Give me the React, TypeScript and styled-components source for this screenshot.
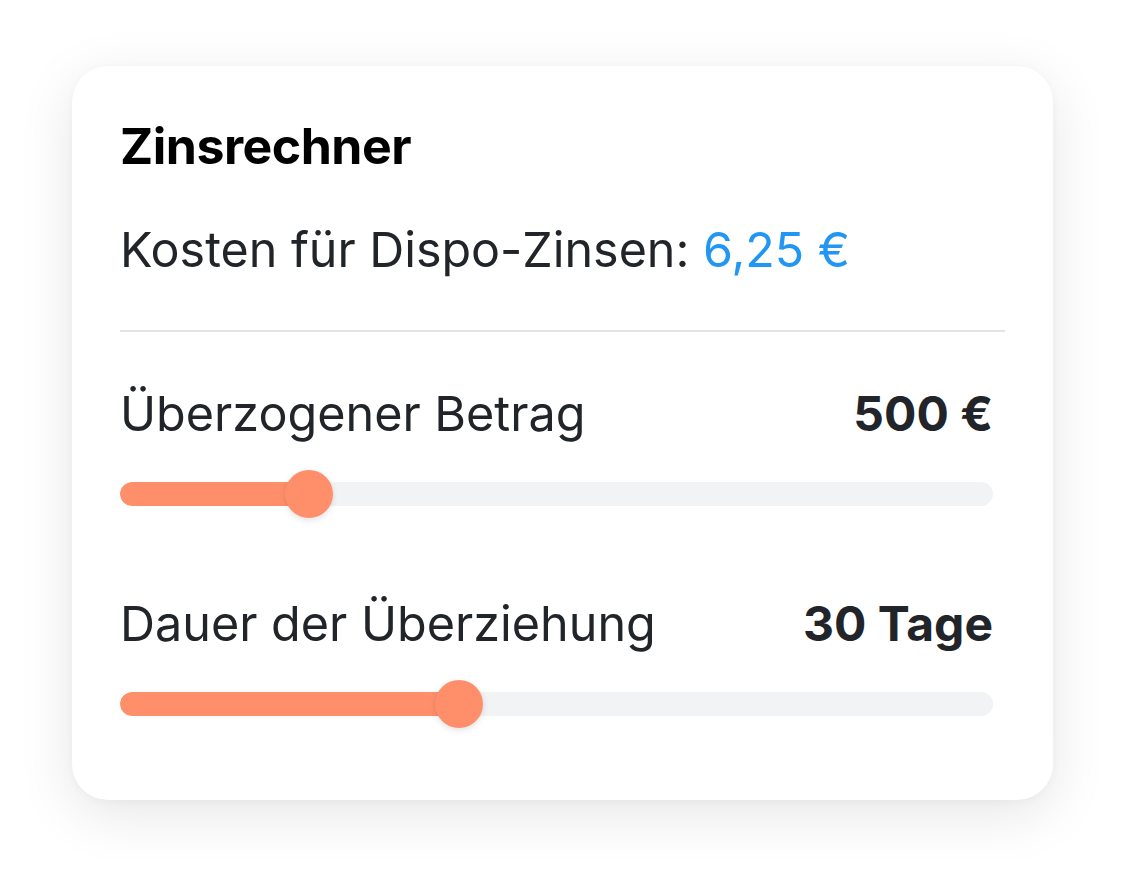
import React from "react";
import styled, { createGlobalStyle } from "styled-components";

const Global = createGlobalStyle`
  html, body { margin: 0; padding: 0; background: #ffffff; }
  body { font-family: Inter, "Noto Sans", "Liberation Sans", sans-serif; -webkit-font-smoothing: antialiased; }
`;

const Page = styled.div`
  width: 1125px;
  height: 879px;
  box-sizing: border-box;
  padding: 66px 72px 0 72px;
  background: #ffffff;
`;

const Card = styled.section`
  box-sizing: border-box;
  width: 981px;
  height: 734px;
  background: #ffffff;
  border-radius: 36px;
  box-shadow: 0 14px 56px rgba(0, 0, 0, 0.1), 0 2px 10px rgba(0, 0, 0, 0.03);
  padding: 50px 48px 0 48px;
  display: flex;
  flex-direction: column;
`;

const Title = styled.h2`
  margin: 0;
  font-size: 50px;
  line-height: 60px;
  font-weight: 700;
  color: #000000;
  letter-spacing: -0.5px;
`;

const Cost = styled.p`
  margin: 46px 0 0 0;
  font-size: 48.4px;
  line-height: 56px;
  font-weight: 400;
  color: #212529;
`;

const Amount = styled.span`
  color: #2196f3;
`;

const Divider = styled.hr`
  margin: 52px 0 0 0;
  border: 0;
  height: 2px;
  background: #e2e3e5;
`;

const Field = styled.div<{ $gap: number }>`
  margin-top: ${(p) => p.$gap}px;
  padding-right: 12px;
  display: flex;
  flex-direction: column;
  gap: 28px;
`;

const LabelRow = styled.div`
  display: flex;
  justify-content: space-between;
  align-items: baseline;
  font-size: 48.5px;
  line-height: 56px;
  color: #212529;
`;

const Label = styled.span`
  font-weight: 400;
`;

const Value = styled.span`
  font-weight: 700;
  font-size: 48px;
`;

const Slider = styled.div`
  position: relative;
  height: 48px;
  display: flex;
  align-items: center;
`;

const Track = styled.div`
  position: relative;
  width: 100%;
  height: 24px;
  border-radius: 12px;
  background: #f2f3f5;
  overflow: hidden;
`;

const Fill = styled.div`
  height: 100%;
  background: #ff8f6b;
  border-radius: 12px 0 0 12px;
`;

const Thumb = styled.div`
  position: absolute;
  top: 0;
  width: 48px;
  height: 48px;
  margin-left: -24px;
  border-radius: 50%;
  background: #ff8f6b;
  box-shadow: 0 2px 6px rgba(0, 0, 0, 0.12);
`;

function RangeSlider({ value, min, max }: { value: number; min: number; max: number }) {
  const frac = (value - min) / (max - min);
  const pos = `calc(24px + (100% - 48px) * ${frac})`;
  return (
    <Slider>
      <Track>
        <Fill style={{ width: pos }} />
      </Track>
      <Thumb style={{ left: pos }} />
    </Slider>
  );
}

export default function App() {
  return (
    <Page>
      <Global />
      <Card>
        <Title>Zinsrechner</Title>
        <Cost>
          Kosten für Dispo-Zinsen: <Amount>6,25 €</Amount>
        </Cost>
        <Divider />
        <Field $gap={54}>
          <LabelRow>
            <Label>Überzogener Betrag</Label>
            <Value>500 €</Value>
          </LabelRow>
          <RangeSlider value={500} min={0} max={2500} />
        </Field>
        <Field $gap={78}>
          <LabelRow>
            <Label>Dauer der Überziehung</Label>
            <Value>30 Tage</Value>
          </LabelRow>
          <RangeSlider value={30} min={1} max={77} />
        </Field>
      </Card>
    </Page>
  );
}
